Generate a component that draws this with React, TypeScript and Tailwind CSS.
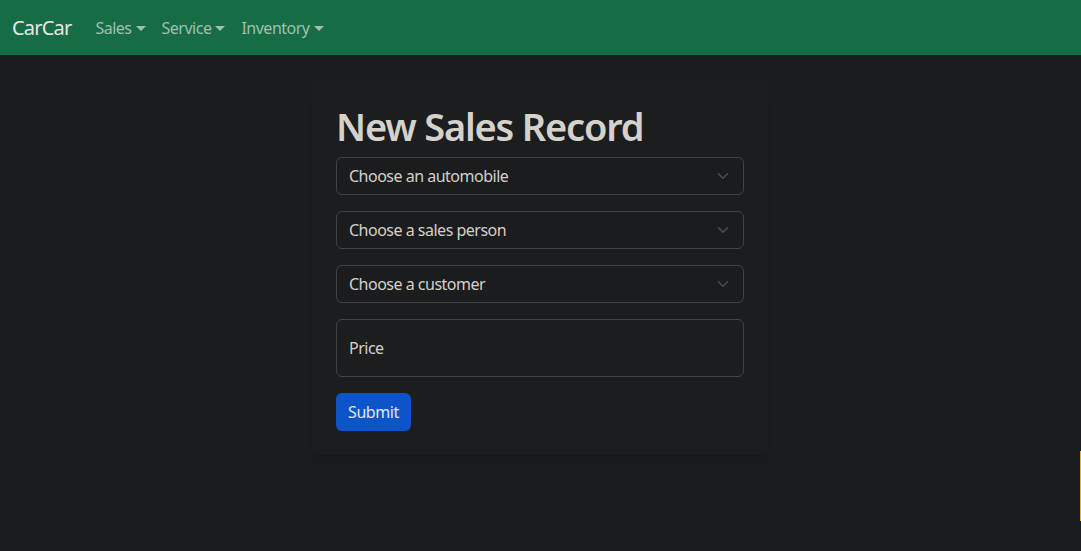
import React from "react";

function Chevron() {
  return (
    <svg width="16" height="12" viewBox="0 0 16 16" className="absolute right-3 top-1/2 -translate-y-1/2" fill="none">
      <path d="M2 5l6 6 6-6" stroke="#4a4e52" strokeWidth="2" strokeLinecap="round" strokeLinejoin="round" />
    </svg>
  );
}

function Select({ label }: { label: string }) {
  return (
    <div className="relative mb-4 h-[38px] rounded-[6px] border border-[#3f4246] bg-[#1b1c1e] flex items-center pl-3 text-[16px] tracking-[-0.5px] text-[#d4d0ca]">
      {label}
      <Chevron />
    </div>
  );
}

function NavItem({ label }: { label: string }) {
  return (
    <div className="flex items-center px-2 text-[16px] tracking-[-0.5px] text-[#a1bfac]">
      {label}
      <span className="ml-[4px] mt-[1px] inline-block w-0 h-0 border-t-[5px] border-t-[#a1bfac] border-l-[5px] border-l-transparent border-r-[5px] border-r-transparent" />
    </div>
  );
}

export default function App() {
  return (
    <div className="relative min-h-[551px] bg-[#1b1c1e]" style={{ fontFamily: '"Noto Sans", "Open Sans", sans-serif' }}>
      <nav className="h-[55px] bg-[#166c45] flex items-center px-3">
        <div className="text-[20px] tracking-[-0.8px] text-[#e8e6e3] mr-4">CarCar</div>
        <NavItem label="Sales" />
        <NavItem label="Service" />
        <NavItem label="Inventory" />
      </nav>
      <div className="flex justify-center pt-6 pr-px">
        <div className="w-[456px] p-6 bg-[#1c1d1f] shadow-[0_8px_16px_rgba(0,0,0,0.12)]">
          <h1 className="text-[38px] leading-[46px] font-semibold tracking-[-1.2px] text-[#d5d1cb] mb-2">New Sales Record</h1>
          <Select label="Choose an automobile" />
          <Select label="Choose a sales person" />
          <Select label="Choose a customer" />
          <div className="mb-4 h-[58px] rounded-[6px] border border-[#3f4246] flex items-center pl-3 text-[16px] tracking-[-0.5px] text-[#d4d0ca]">
            Price
          </div>
          <button className="h-[38px] px-3 rounded-[6px] bg-[#0b55c9] text-[16px] tracking-[-0.4px] text-[#e8e6e3]">Submit</button>
        </div>
      </div>
      <div className="absolute right-0 top-[451px] w-px h-[70px] bg-[#e5b43c]" />
    </div>
  );
}
